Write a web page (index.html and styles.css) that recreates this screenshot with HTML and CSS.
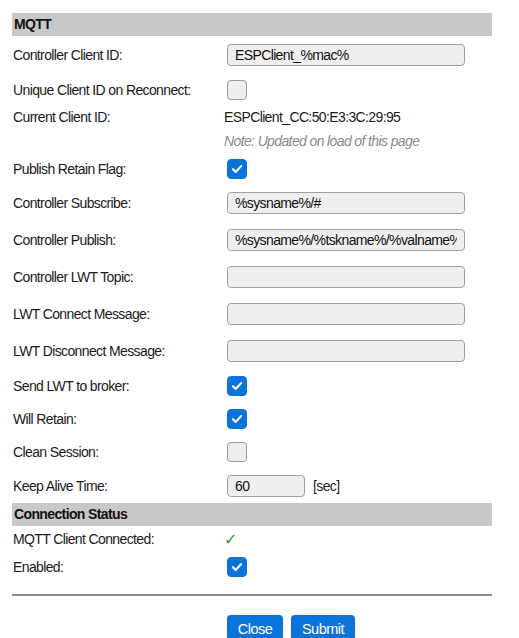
FILE: index.html
```html
<!DOCTYPE html>
<html>
<head>
<meta charset="utf-8">
<link rel="stylesheet" href="styles.css">
</head>
<body>
<div class="page">
  <div class="sect">MQTT</div>
  <div class="row h37"><div class="lbl">Controller Client ID:</div><div class="val"><input class="txt" type="text" value="ESPClient_%mac%"></div></div>
  <div class="row h33"><div class="lbl">Unique Client ID on Reconnect:</div><div class="val"><span class="cb"></span></div></div>
  <div class="row h22"><div class="lbl">Current Client ID:</div><div class="val plain">ESPClient_CC:50:E3:3C:29:95</div></div>
  <div class="row h26"><div class="lbl"></div><div class="val plain note">Note: Updated on load of this page</div></div>
  <div class="row h30"><div class="lbl">Publish Retain Flag:</div><div class="val"><span class="cb on"><svg viewBox="0 0 20 20"><path d="M5.5 10.2 L8.6 13.2 L14.6 6.8"/></svg></span></div></div>
  <div class="row h37"><div class="lbl">Controller Subscribe:</div><div class="val"><input class="txt" type="text" value="%sysname%/#"></div></div>
  <div class="row h37"><div class="lbl">Controller Publish:</div><div class="val"><input class="txt" type="text" value="%sysname%/%tskname%/%valname%"></div></div>
  <div class="row h37"><div class="lbl">Controller LWT Topic:</div><div class="val"><input class="txt" type="text" value=""></div></div>
  <div class="row h37"><div class="lbl">LWT Connect Message:</div><div class="val"><input class="txt" type="text" value=""></div></div>
  <div class="row h37"><div class="lbl">LWT Disconnect Message:</div><div class="val"><input class="txt" type="text" value=""></div></div>
  <div class="row h33"><div class="lbl">Send LWT to broker:</div><div class="val"><span class="cb on"><svg viewBox="0 0 20 20"><path d="M5.5 10.2 L8.6 13.2 L14.6 6.8"/></svg></span></div></div>
  <div class="row h33"><div class="lbl">Will Retain:</div><div class="val"><span class="cb on"><svg viewBox="0 0 20 20"><path d="M5.5 10.2 L8.6 13.2 L14.6 6.8"/></svg></span></div></div>
  <div class="row h33"><div class="lbl">Clean Session:</div><div class="val"><span class="cb"></span></div></div>
  <div class="row h35"><div class="lbl">Keep Alive Time:</div><div class="val"><input class="txt short" type="text" value="60"><span class="unit">[sec]</span></div></div>
  <div class="sect">Connection Status</div>
  <div class="row h26"><div class="lbl">MQTT Client Connected:</div><div class="val plain"><span class="ok">✓</span></div></div>
  <div class="row h30"><div class="lbl">Enabled:</div><div class="val"><span class="cb on"><svg viewBox="0 0 20 20"><path d="M5.5 10.2 L8.6 13.2 L14.6 6.8"/></svg></span></div></div>
  <div class="rule"></div>
  <div class="btns">
    <button class="btn close">Close</button>
    <button class="btn submit">Submit</button>
  </div>
</div>
</body>
</html>
```
FILE: styles.css
```css
html, body {
  margin: 0;
  padding: 0;
  background: #fff;
}
body {
  font-family: "Liberation Sans", Arial, sans-serif;
  font-size: 14px;
  letter-spacing: -0.62px;
  color: #1a1a1a;
  overflow: hidden;
}
.page {
  padding: 13px 0 0 12px;
  width: 480px;
}
.sect {
  background: #c8c8c8;
  height: 23px;
  line-height: 23px;
  font-weight: bold;
  padding-left: 2px;
  color: #111;
}
.row {
  display: flex;
  align-items: center;
}
.h22 { height: 22px; }
.h26 { height: 26px; }
.h30 { height: 30px; }
.h33 { height: 33px; }
.h35 { height: 35px; }
.h37 { height: 37px; }
.lbl {
  width: 212px;
  padding-left: 1px;
  box-sizing: border-box;
}
.val {
  flex: 1;
  display: flex;
  align-items: center;
  padding-left: 3px;
}
.val.plain {
  padding-left: 0;
}
.note {
  font-style: italic;
  color: #8a8a8a;
}
.txt {
  width: 238px;
  height: 22px;
  box-sizing: border-box;
  border: 1px solid #a0a0a0;
  border-radius: 4px;
  background: #efefef;
  font-family: "Liberation Sans", Arial, sans-serif;
  font-size: 14px;
  letter-spacing: -0.62px;
  color: #111;
  padding: 0 7px;
  margin: 0;
  outline: none;
}
.txt.short {
  width: 78px;
}
.unit {
  margin-left: 8px;
}
.cb {
  display: block;
  width: 20px;
  height: 20px;
  box-sizing: border-box;
  border: 1px solid #9a9a9a;
  border-radius: 4px;
  background: #efefef;
}
.cb.on {
  background: #0a74da;
  border-color: #0a74da;
}
.cb svg {
  display: block;
  width: 18px;
  height: 18px;
}
.cb svg path {
  fill: none;
  stroke: #fff;
  stroke-width: 2.4;
  stroke-linecap: round;
  stroke-linejoin: round;
}
.ok {
  color: #1f9a3a;
  font-family: "DejaVu Sans", sans-serif;
  font-size: 16px;
  letter-spacing: 0;
  padding-left: 0;
}
.rule {
  margin-top: 12px;
  height: 2px;
  background: #8c8c8c;
}
.btns {
  display: flex;
  gap: 8px;
  padding-left: 215px;
  margin-top: 19px;
}
.btn {
  height: 26px;
  border: none;
  border-radius: 4px;
  background: #0a74da;
  color: #fff;
  font-family: "Liberation Sans", Arial, sans-serif;
  font-size: 14.5px;
  letter-spacing: -0.5px;
  padding: 2px 0 0;
  margin: 0;
}
.btn.close { width: 56px; }
.btn.submit { width: 64px; }
```
